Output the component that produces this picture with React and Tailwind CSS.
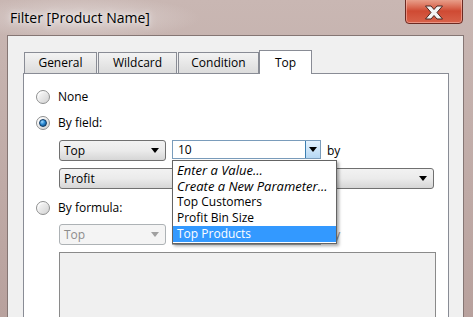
import { useState } from 'react';

const FONT = 'font-["Open_Sans","Liberation_Sans",sans-serif]';

const Caret = ({ className = '' }) => (
  <svg width="8" height="5" viewBox="0 0 8 5" className={className}>
    <path d="M0 0H8L4 5Z" fill="currentColor" />
  </svg>
);

const Radio = ({ checked }) => (
  <span className="relative flex h-[14px] w-[14px] shrink-0 items-center justify-center rounded-full border border-[#8e8f8f] bg-gradient-to-br from-[#fdfdfd] to-[#d2d2d2] shadow-[inset_1px_1px_1px_rgba(255,255,255,0.9)]">
    {checked && (
      <span className="h-[8px] w-[8px] rounded-full bg-[radial-gradient(circle_at_35%_30%,#9fd8ff_0%,#2a8ad4_45%,#0b3f73_100%)] border border-[#0d3a66]" />
    )}
  </span>
);

const RadioRow = ({ checked, label, className = '' }) => (
  <div className={`flex h-[14px] items-center gap-[8px] ${className}`}>
    <Radio checked={checked} />
    <span className="text-[12px] leading-none text-black">{label}</span>
  </div>
);

const Select = ({ value, width, disabled }) => (
  <div
    className={`flex h-[21px] ${width} shrink-0 items-center justify-between rounded-[3px] border pl-[4px] pr-[6px] text-[12px] ${
      disabled
        ? 'border-[#adb2b5] bg-[#f4f4f4] text-[#8d8d8d]'
        : 'border-[#707070] bg-gradient-to-b from-[#f2f2f2] via-[#ebebeb] to-[#d6d6d6] text-black'
    }`}
  >
    <span>{value}</span>
    <Caret className={disabled ? 'text-[#a0a0a0]' : 'text-black'} />
  </div>
);

const Tab = ({ label, width, active }) =>
  active ? (
    <div
      className={`relative z-10 -mb-px flex h-[24px] ${width} items-center justify-center border border-b-0 border-[#898c95] bg-white text-[12px]`}
    >
      {label}
    </div>
  ) : (
    <div
      className={`flex h-[21px] ${width} items-center justify-center border border-b-0 border-[#898c95] bg-gradient-to-b from-[#f3f3f3] to-[#dcdcdc] text-[12px]`}
    >
      {label}
    </div>
  );

const OPTIONS = [
  { label: 'Enter a Value...', italic: true },
  { label: 'Create a New Parameter...', italic: true },
  { label: 'Top Customers' },
  { label: 'Profit Bin Size' },
  { label: 'Top Products' },
];

export default function App() {
  const [selected] = useState(4);

  return (
    <div
      className={`relative h-[317px] w-[473px] overflow-hidden bg-gradient-to-b from-[#c9b7b3] to-[#b8a19d] ${FONT}`}
    >
      {/* title bar */}
      <div className="flex h-[35px] items-center bg-[radial-gradient(ellipse_120px_22px_at_80px_18px,#ddd2d0_0%,rgba(221,210,208,0)_100%)] pl-[10px]">
        <span className="text-[14px] leading-none text-black [text-shadow:0_0_8px_#eee,0_0_4px_#eee]">
          Filter [Product Name]
        </span>
      </div>

      {/* close button */}
      <div className="absolute left-[405px] top-[-2px] flex h-[26px] w-[58px] items-center justify-center rounded-b-[4px] border border-[#6b2a22] bg-gradient-to-b from-[#e9a591] via-[#cf4a33] to-[#d8624a] shadow-[inset_0_0_0_1px_rgba(255,200,190,0.5)]">
        <svg width="20" height="15" viewBox="0 0 20 15" className="mt-[2px]">
          <path
            d="M1.5 1L7 1L10 4.5L13 1L18.5 1L13 7.5L18.5 14L13 14L10 10.5L7 14L1.5 14L7 7.5Z"
            fill="#f4f4f4"
            stroke="#4a2620"
            strokeWidth="1"
            strokeLinejoin="round"
          />
        </svg>
      </div>

      {/* client area */}
      <div className="ml-[7px] h-[290px] w-[457px] border border-[#857674] bg-[#f0f0f0] pl-[15px] pr-[14px] pt-[13px]">
        {/* tabs */}
        <div className="flex h-[24px] items-end pl-[1px]">
          <Tab label="General" width="w-[73px]" />
          <div className="w-px" />
          <Tab label="Wildcard" width="w-[79px]" />
          <div className="w-px" />
          <Tab label="Condition" width="w-[81px]" />
          <Tab label="Top" width="w-[53px]" active />
        </div>

        {/* tab panel */}
        <div className="relative h-[260px] w-[426px] border border-[#898c95] bg-white pl-[12px] pt-[16px]">
          <RadioRow label="None" />
          <RadioRow checked label="By field:" className="mt-[12px]" />

          <div className="ml-[23px] mt-[10px] flex items-center gap-[6px]">
            <Select value="Top" width="w-[107px]" />
            <div className="flex h-[19px] w-[149px] items-center self-start border border-[#7a9cbb] bg-white pl-[5px] text-[12px]">
              <span className="flex-1">10</span>
              <div className="flex h-full w-[15px] items-center justify-center border-l border-[#3c7fb1] bg-gradient-to-b from-[#e4f2fd] to-[#b6d8f4]">
                <Caret />
              </div>
            </div>
            <span className="text-[12px]">by</span>
          </div>

          <div className="ml-[23px] mt-[7px]">
            <Select value="Profit" width="w-[375px]" />
          </div>

          <RadioRow label="By formula:" className="mt-[12px]" />

          <div className="ml-[23px] mt-[9px] flex items-center gap-[6px]">
            <Select value="Top" width="w-[107px]" disabled />
            <div className="h-[21px] w-[149px] border border-[#adb2b5] bg-[#f4f4f4]" />
            <span className="text-[12px] text-[#8d8d8d]">by</span>
          </div>

          <div className="ml-[23px] mt-[7px] h-[80px] w-[377px] border border-[#8a8a8a] bg-[#f0f0f0]" />

          {/* open dropdown list */}
          <div className="absolute left-[148px] top-[86px] w-[165px] border border-[#646464] bg-white py-px shadow-[2px_2px_3px_rgba(0,0,0,0.35)]">
            {OPTIONS.map((o, i) => (
              <div
                key={o.label}
                className={`flex h-[16px] items-center pl-[4px] leading-none ${
                  o.italic ? 'text-[13px] italic' : 'text-[12px]'
                } ${i === selected ? 'bg-[#3399ff] text-white' : 'text-black'}`}
              >
                {o.label}
              </div>
            ))}
          </div>
        </div>
      </div>
    </div>
  );
}
